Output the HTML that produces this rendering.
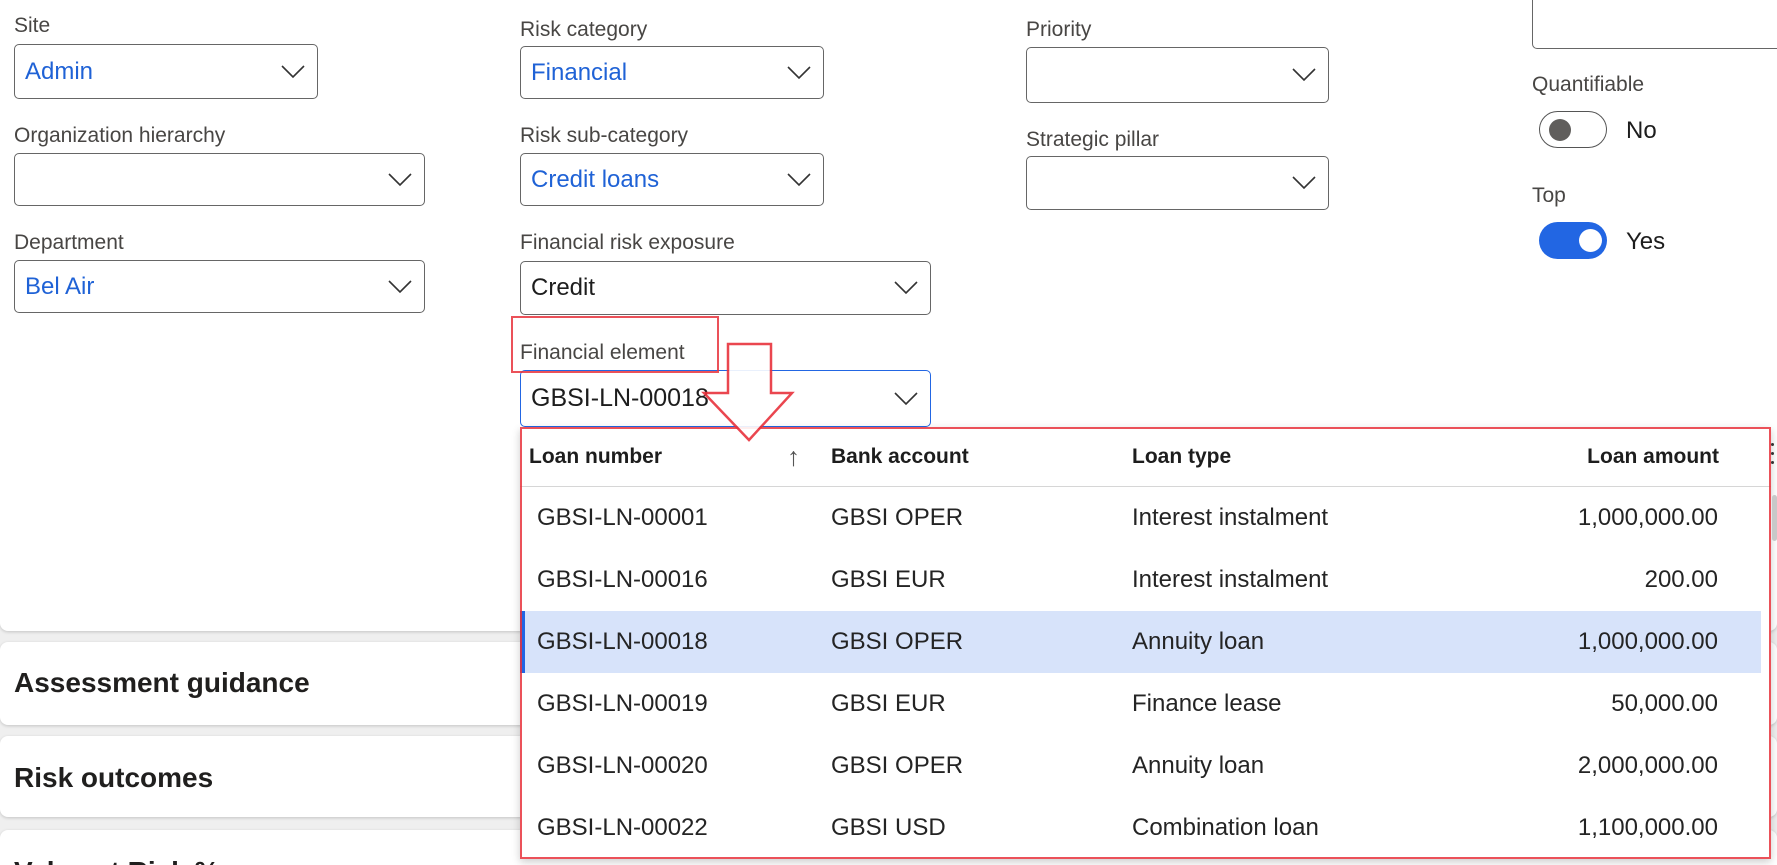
<!DOCTYPE html>
<html><head><meta charset="utf-8"><style>
*{box-sizing:border-box;margin:0;padding:0}
html{width:1777px;height:865px;overflow:hidden}
body{width:1777px;height:865px;overflow:hidden;background:#efefef;font-family:"Liberation Sans",sans-serif;position:relative}
.abs{position:absolute}
.lbl{position:absolute;font-size:21px;line-height:1;color:#484644;white-space:nowrap}
.box{position:absolute;border:1px solid #666;border-radius:5px;background:#fff;display:flex;align-items:center;padding-left:10px;font-size:24px;color:#1d1d1d}
.box.blue{color:#1f62d6}
.box svg{position:absolute;right:12px;top:50%;margin-top:-7px}
.card{position:absolute;left:0;width:1777px;background:#fff;border-radius:8px;box-shadow:0 1px 3px rgba(0,0,0,.18)}
.h{position:absolute;left:14px;font-size:28px;font-weight:bold;color:#201f1e;line-height:1}
.dd{position:absolute;left:520px;top:427px;width:1251px;height:432px;background:#fff;box-shadow:0 3px 8px rgba(0,0,0,.2)}
.row{position:absolute;left:0;width:1241px;height:62px;font-size:24px;color:#242424}
.row span{position:absolute;top:50%;transform:translateY(-50%);white-space:nowrap}
.hd span{font-size:21px;font-weight:bold;color:#1d1d1d}
</style></head><body>
<div class="card" style="top:-10px;height:641px;border-radius:0 0 8px 8px"></div>
<div class="card" style="top:642px;height:83px"></div>
<div class="card" style="top:736px;height:81px"></div>
<div class="card" style="top:830px;height:35px;border-radius:8px 8px 0 0;overflow:hidden"><div class="h" style="top:28px">Value at Risk %</div></div>
<div class="h" style="top:669px">Assessment guidance</div>
<div class="h" style="top:764px">Risk outcomes</div>

<!-- column 1 -->
<div class="lbl" style="left:14px;top:15px">Site</div>
<div class="box blue" style="left:14px;top:44px;width:304px;height:55px">Admin<svg width="24" height="14"><path d="M1 1L12 12L23 1" fill="none" stroke="#333" stroke-width="1.6"/></svg></div>
<div class="lbl" style="left:14px;top:125px">Organization hierarchy</div>
<div class="box" style="left:14px;top:153px;width:411px;height:53px"><svg width="24" height="14"><path d="M1 1L12 12L23 1" fill="none" stroke="#333" stroke-width="1.6"/></svg></div>
<div class="lbl" style="left:14px;top:232px">Department</div>
<div class="box blue" style="left:14px;top:260px;width:411px;height:53px">Bel Air<svg width="24" height="14"><path d="M1 1L12 12L23 1" fill="none" stroke="#333" stroke-width="1.6"/></svg></div>

<!-- column 2 -->
<div class="lbl" style="left:520px;top:19px">Risk category</div>
<div class="box blue" style="left:520px;top:46px;width:304px;height:53px">Financial<svg width="24" height="14"><path d="M1 1L12 12L23 1" fill="none" stroke="#333" stroke-width="1.6"/></svg></div>
<div class="lbl" style="left:520px;top:125px">Risk sub-category</div>
<div class="box blue" style="left:520px;top:153px;width:304px;height:53px">Credit loans<svg width="24" height="14"><path d="M1 1L12 12L23 1" fill="none" stroke="#333" stroke-width="1.6"/></svg></div>
<div class="lbl" style="left:520px;top:232px">Financial risk exposure</div>
<div class="box" style="left:520px;top:261px;width:411px;height:54px">Credit<svg width="24" height="14"><path d="M1 1L12 12L23 1" fill="none" stroke="#333" stroke-width="1.6"/></svg></div>
<div class="lbl" style="left:520px;top:342px">Financial element</div>
<div class="box" style="left:520px;top:370px;width:411px;height:57px;border-color:#2266e3;font-size:25px">GBSI-LN-00018<svg width="24" height="14"><path d="M1 1L12 12L23 1" fill="none" stroke="#333" stroke-width="1.6"/></svg></div>

<!-- column 3 -->
<div class="lbl" style="left:1026px;top:19px">Priority</div>
<div class="box" style="left:1026px;top:47px;width:303px;height:56px"><svg width="24" height="14"><path d="M1 1L12 12L23 1" fill="none" stroke="#333" stroke-width="1.6"/></svg></div>
<div class="lbl" style="left:1026px;top:129px">Strategic pillar</div>
<div class="box" style="left:1026px;top:156px;width:303px;height:54px"><svg width="24" height="14"><path d="M1 1L12 12L23 1" fill="none" stroke="#333" stroke-width="1.6"/></svg></div>

<!-- column 4 -->
<div class="abs" style="left:1532px;top:-10px;width:245px;height:59px;border:1px solid #666;border-right:none;border-radius:5px 0 0 5px;background:#fff"></div>
<div class="lbl" style="left:1532px;top:74px">Quantifiable</div>
<div class="abs" style="left:1539px;top:111px;width:68px;height:37px;border:1px solid #555;border-radius:19px;background:#fff"></div>
<div class="abs" style="left:1549px;top:119px;width:22px;height:22px;border-radius:50%;background:#605e5c"></div>
<div class="abs" style="left:1626px;top:119px;font-size:24px;line-height:1;color:#1d1d1d">No</div>
<div class="lbl" style="left:1532px;top:185px">Top</div>
<div class="abs" style="left:1539px;top:222px;width:68px;height:37px;border-radius:19px;background:#2266e3"></div>
<div class="abs" style="left:1579px;top:229px;width:23px;height:23px;border-radius:50%;background:#fff"></div>
<div class="abs" style="left:1626px;top:230px;font-size:24px;line-height:1;color:#1d1d1d">Yes</div>

<!-- dropdown -->
<div class="dd">
 <div class="row hd" style="top:0;height:60px;border-bottom:1px solid #d6d6d6;width:1251px">
  <span style="left:9px">Loan number</span>
  <span style="left:267px;font-weight:normal;color:#555;font-size:26px">↑</span>
  <span style="left:311px">Bank account</span>
  <span style="left:612px">Loan type</span>
  <span style="right:52px">Loan amount</span>
 </div>
 <div class="row" style="top:60px"><span style="left:17px">GBSI-LN-00001</span><span style="left:311px">GBSI OPER</span><span style="left:612px">Interest instalment</span><span style="right:43px">1,000,000.00</span></div>
 <div class="row" style="top:122px"><span style="left:17px">GBSI-LN-00016</span><span style="left:311px">GBSI EUR</span><span style="left:612px">Interest instalment</span><span style="right:43px">200.00</span></div>
 <div class="row" style="top:184px;background:#d7e3fa;border-left:5px solid #2266e3"><span style="left:12px">GBSI-LN-00018</span><span style="left:306px">GBSI OPER</span><span style="left:607px">Annuity loan</span><span style="right:43px">1,000,000.00</span></div>
 <div class="row" style="top:246px"><span style="left:17px">GBSI-LN-00019</span><span style="left:311px">GBSI EUR</span><span style="left:612px">Finance lease</span><span style="right:43px">50,000.00</span></div>
 <div class="row" style="top:308px"><span style="left:17px">GBSI-LN-00020</span><span style="left:311px">GBSI OPER</span><span style="left:612px">Annuity loan</span><span style="right:43px">2,000,000.00</span></div>
 <div class="row" style="top:370px"><span style="left:17px">GBSI-LN-00022</span><span style="left:311px">GBSI USD</span><span style="left:612px">Combination loan</span><span style="right:43px">1,100,000.00</span></div>
</div>
<div class="abs" style="left:1772px;top:495px;width:5px;height:46px;border-radius:3px;background:#c8c8c8"></div>
<div class="abs" style="left:1771px;top:443px;width:3px;height:3px;background:#333;border-radius:50%"></div>
<div class="abs" style="left:1771px;top:452px;width:3px;height:3px;background:#333;border-radius:50%"></div>
<div class="abs" style="left:1771px;top:461px;width:3px;height:3px;background:#333;border-radius:50%"></div>

<!-- annotations -->
<div class="abs" style="left:520px;top:427px;width:1251px;height:432px;border:2px solid #e8323c;opacity:.85"></div>
<div class="abs" style="left:511px;top:316px;width:208px;height:57px;border:2px solid #e8323c;opacity:.85"></div>
<svg class="abs" style="left:700px;top:340px" width="100" height="105"><path d="M28 4H71V53H92L49 100L4 53H28Z" fill="#fff" stroke="#e8323c" stroke-width="2.5" opacity=".9"/></svg>
</body></html>
